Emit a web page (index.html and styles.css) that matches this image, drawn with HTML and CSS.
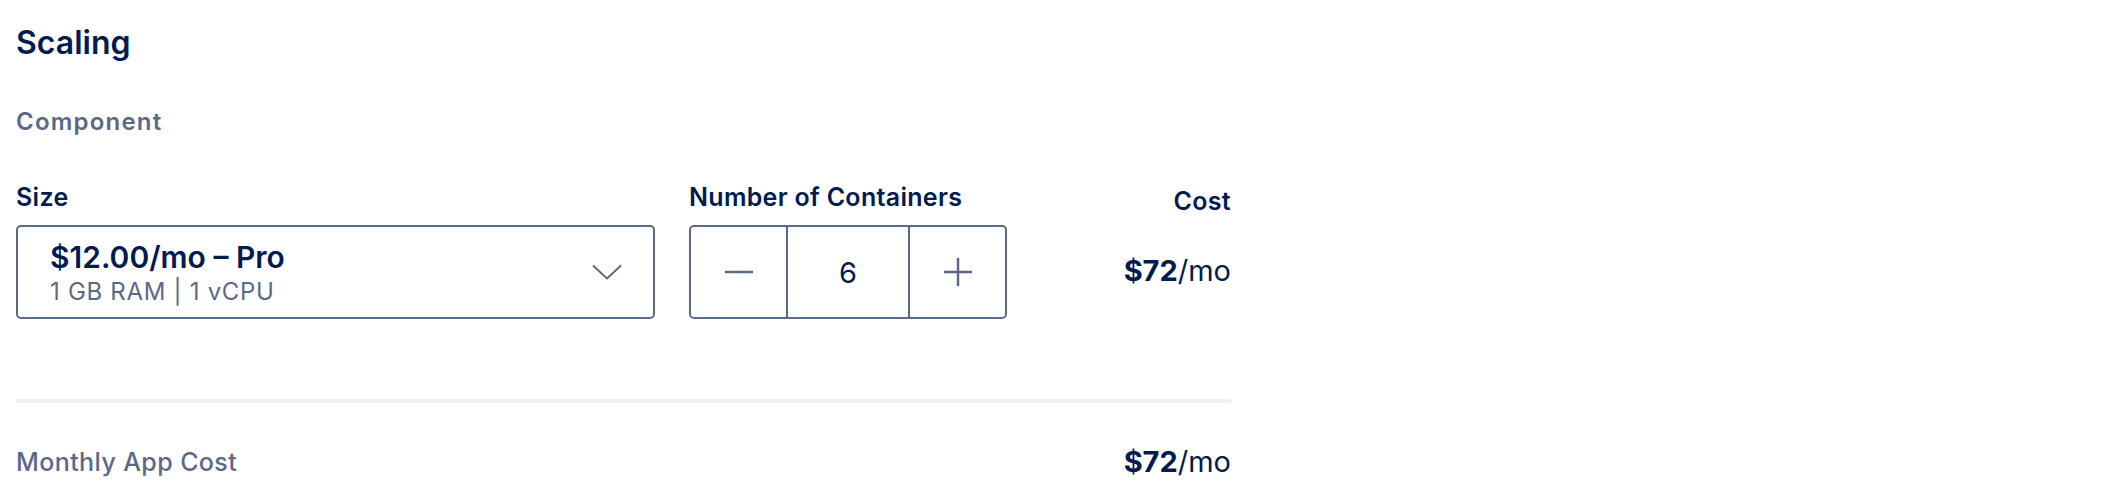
FILE: index.html
```html
<!DOCTYPE html>
<html>
<head>
<meta charset="utf-8">
<link rel="stylesheet" href="styles.css">
</head>
<body>
<main class="scaling">
  <h2 class="title">Scaling</h2>
  <div class="component-label">Component</div>
  <div class="row">
    <div class="field size-field">
      <div class="label">Size</div>
      <div class="select">
        <div class="select-text">
          <div class="select-value">$12.00/mo – Pro</div>
          <div class="select-sub">1 GB RAM | 1 vCPU</div>
        </div>
        <svg class="chevron" width="30" height="16" viewBox="0 0 30 16"><path d="M1 1.5 L15 14.5 L29 1.5" fill="none" stroke="#5b6987" stroke-width="2"/></svg>
      </div>
    </div>
    <div class="field count-field">
      <div class="label">Number of Containers</div>
      <div class="stepper">
        <div class="step-btn"><svg width="30" height="30" viewBox="0 0 30 30"><path d="M1 15 H29" stroke="#5b6987" stroke-width="2.5"/></svg></div>
        <div class="step-value">6</div>
        <div class="step-btn"><svg width="30" height="30" viewBox="0 0 30 30"><path d="M1 15 H29 M15 1 V29" stroke="#5b6987" stroke-width="2.5"/></svg></div>
      </div>
    </div>
    <div class="field cost-field">
      <div class="label cost-label">Cost</div>
      <div class="cost-value"><b>$72</b>/mo</div>
    </div>
  </div>
  <div class="divider"></div>
  <div class="total-row">
    <span class="total-label">Monthly App Cost</span>
    <span class="cost-value"><b>$72</b>/mo</span>
  </div>
</main>
</body>
</html>
```
FILE: styles.css
```css
html, body {
  margin: 0;
  padding: 0;
  background: #fff;
}
body {
  font-family: "Inter", "Liberation Sans", sans-serif;
  color: #031b4e;
}
.scaling {
  width: 1215px;
  padding: 23px 0 0 16px;
}
.title {
  margin: 0;
  font-size: 32px;
  line-height: 40px;
  font-weight: 600;
  color: #031b4e;
}
.component-label {
  margin-top: 44px;
  font-size: 24px;
  line-height: 30px;
  font-weight: 600;
  letter-spacing: 1.2px;
  color: #5b6987;
}
.row {
  display: flex;
  align-items: flex-start;
  margin-top: 45px;
}
.label {
  font-size: 25px;
  line-height: 30px;
  font-weight: 600;
  letter-spacing: 0.3px;
  color: #031b4e;
  margin-bottom: 13px;
}
.size-field {
  width: 639px;
}
.count-field {
  margin-left: 34px;
}
.cost-field {
  flex: 1;
  text-align: right;
}
.cost-label {
  margin-top: 4px;
}
.select {
  box-sizing: border-box;
  height: 94px;
  border: 2px solid #5b6987;
  border-radius: 5px;
  display: flex;
  align-items: center;
  justify-content: space-between;
  padding: 0 31px 0 32px;
}
.select-value {
  font-size: 30px;
  line-height: 36px;
  font-weight: 600;
  color: #031b4e;
}
.select-sub {
  margin-top: 3px;
  font-size: 24px;
  line-height: 28px;
  font-weight: 400;
  letter-spacing: 0.7px;
  color: #5b6987;
}
.chevron {
  display: block;
}
.stepper {
  box-sizing: border-box;
  display: flex;
  height: 94px;
  width: 318px;
  border: 2px solid #5b6987;
  border-radius: 5px;
}
.step-btn {
  width: 95px;
  display: flex;
  align-items: center;
  justify-content: center;
}
.step-btn svg {
  display: block;
}
.step-value {
  flex: 1;
  border-left: 2px solid #5b6987;
  border-right: 2px solid #5b6987;
  display: flex;
  align-items: center;
  justify-content: center;
  font-size: 29px;
  color: #031b4e;
}
.cost-value {
  font-size: 29px;
  line-height: 36px;
  color: #031b4e;
  font-weight: 400;
}
.cost-field .cost-value {
  margin-top: 37px;
}
.cost-value b {
  font-weight: 700;
}
.divider {
  margin-top: 80px;
  height: 4px;
  background: #f0f0f0;
}
.total-row {
  display: flex;
  justify-content: space-between;
  align-items: center;
  margin-top: 41px;
}
.total-label {
  font-size: 25px;
  line-height: 36px;
  font-weight: 500;
  letter-spacing: 0.4px;
  color: #5b6987;
}
```
